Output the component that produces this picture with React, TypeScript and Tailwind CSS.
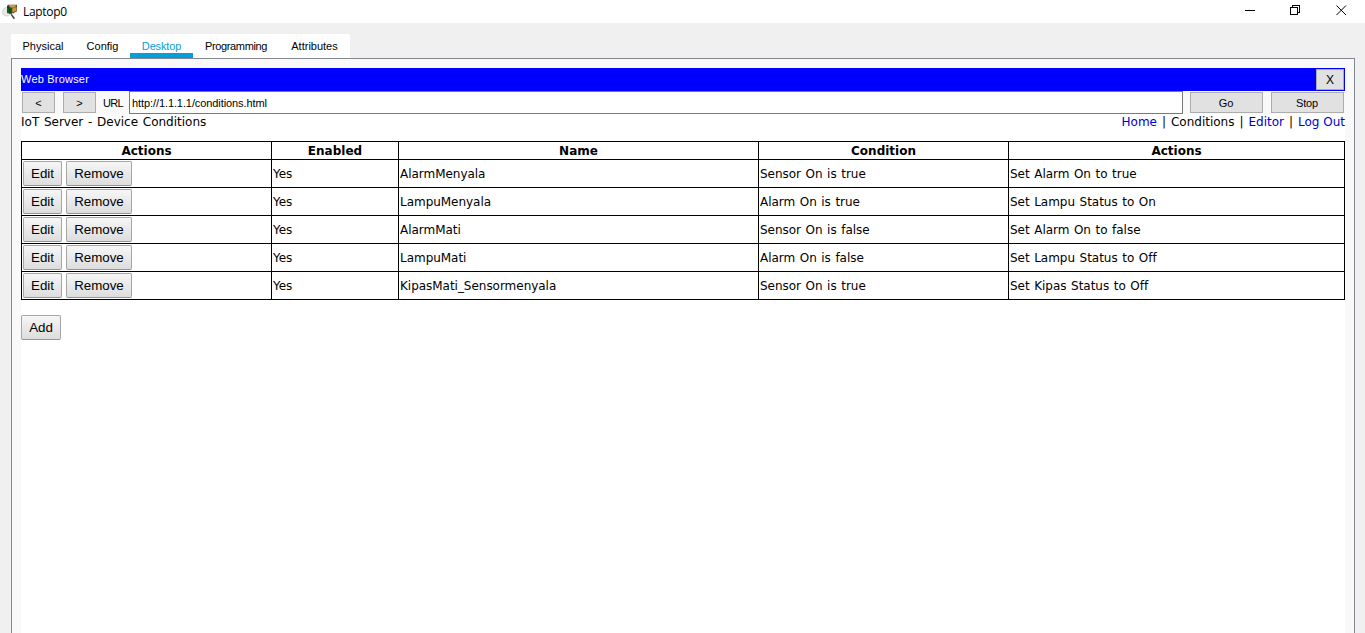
import type { ReactNode } from 'react';

const arial = "font-['Liberation_Sans',Arial,sans-serif]";
const verdana = "font-['DejaVu_Sans',Verdana,sans-serif]";

const tabs = [
  { label: 'Physical', box: 'w-16', active: false },
  { label: 'Config', box: 'w-[55px]', active: false },
  { label: 'Desktop', box: 'w-[63px] tracking-[-0.15px]', active: true },
  { label: 'Programming', box: 'w-[86px] tracking-[-0.35px]', active: false },
  { label: 'Attributes', box: 'w-[71px]', active: false },
];

const rules = [
  { name: 'AlarmMenyala', condition: 'Sensor On is true', action: 'Set Alarm On to true' },
  { name: 'LampuMenyala', condition: 'Alarm On is true', action: 'Set Lampu Status to On' },
  { name: 'AlarmMati', condition: 'Sensor On is false', action: 'Set Alarm On to false' },
  { name: 'LampuMati', condition: 'Alarm On is false', action: 'Set Lampu Status to Off' },
  { name: 'KipasMati_Sensormenyala', condition: 'Sensor On is true', action: 'Set Kipas Status to Off' },
];

const headers = ['Actions', 'Enabled', 'Name', 'Condition', 'Actions'];
const columns = 'grid grid-cols-[250px_127px_360px_250px_336px]';

function NativeButton({ className, children }: { className: string; children: ReactNode }) {
  return (
    <button className={`flex h-[21px] shrink-0 items-center justify-center border border-[#adadad] bg-[#e1e1e1] pt-px text-[11px] text-black ${className}`}>
      {children}
    </button>
  );
}

function FormButton({ className, children }: { className: string; children: ReactNode }) {
  return (
    <button className={`flex h-[25px] shrink-0 items-center justify-center rounded-[2px] border border-[#a6a6a6] border-b-[#949494] bg-linear-to-b from-[#f6f6f6] to-[#dddddd] pt-px text-[13.33px] leading-4 text-black ${arial} ${className}`}>
      {children}
    </button>
  );
}

function Cell({ children }: { children: ReactNode }) {
  return (
    <div className="flex items-center border-r border-b border-black pl-px tracking-[-0.03px] whitespace-pre [word-spacing:0.8px]">
      {children}
    </div>
  );
}

function Separator() {
  return <span className="w-3.5 text-center">|</span>;
}

function AppIcon() {
  return (
    <svg width="16" height="16" viewBox="0 0 16 16">
      <ellipse cx="4.8" cy="7.8" rx="4.3" ry="4.2" fill="#e6e9e6" stroke="#c3c7c3" strokeWidth=".7" />
      <path d="M5.5.8H15v6.4L11 9.5 5.5 7.5z" fill="#5d4820" />
      <path d="m6.8 1 7.6.2-2 2.3-4 .2z" fill="#caa052" />
      <path d="M10.3 4.2 14.5 3v3.9l-4.2 1.6z" fill="#c1974a" />
      <path d="M5 1.8 9.8 4v6.3L5 9z" fill="#14601f" />
      <path d="M5.5 2.5 8 6v3.4" fill="none" stroke="#0a3515" />
      <path d="m9.2 10.4 3.2 4.4" stroke="#3c4341" strokeWidth="1.5" />
    </svg>
  );
}

export default function App() {
  return (
    <div className={`flex h-[633px] w-[1365px] flex-col overflow-hidden bg-[#f0f0f0] text-black ${arial}`}>
      <header className="flex h-[23px] shrink-0 items-start justify-between bg-white pr-[18px] pl-0.5">
        <div className="flex items-center gap-[5px] pt-[3px]">
          <AppIcon />
          <span className="font-['Open_Sans','Noto_Sans',sans-serif] text-[12px] leading-[18px] tracking-[-0.3px]">Laptop0</span>
        </div>
        <div className="flex items-center gap-[35px] pt-[5px]">
          <svg width="11" height="11" viewBox="0 0 11 11" shapeRendering="crispEdges">
            <path d="M1 5.5h10" stroke="#000" />
          </svg>
          <svg width="11" height="11" viewBox="0 0 11 11" fill="none" stroke="#000" shapeRendering="crispEdges">
            <path d="M.5 2.5h7v7h-7zM2.5 2.5v-2h7v7h-2" />
          </svg>
          <svg width="11" height="11" viewBox="0 0 11 11" stroke="#000">
            <path d="m.5.5 9.5 9.5m0-9.5-9.5 9.5" />
          </svg>
        </div>
      </header>

      <nav className="mt-[11px] ml-[11px] flex h-6 w-[339px] shrink-0 bg-white text-[11px]">
        {tabs.map((tab) => (
          <div
            key={tab.label}
            className={`flex h-6 items-center justify-center whitespace-nowrap ${tab.box} ${tab.active ? 'border-b-[5px] border-[#049fd9] pt-[5px] text-[#049fd9]' : ''}`}
          >
            {tab.label}
          </div>
        ))}
      </nav>

      <main className="mr-2.5 ml-[11px] flex flex-1 flex-col border-x border-t border-[#828790] bg-[#f9f9f9] px-[9px] pt-[9px]">
        <div className="flex h-[23px] shrink-0 items-center justify-between bg-[#0000ff] pr-px text-[11px] text-white">
          <span className="tracking-[0.2px]">Web Browser</span>
          <NativeButton className="w-7 text-[12px]">X</NativeButton>
        </div>
        <div className="flex h-[23px] shrink-0 items-center pr-px pl-px text-[11px]">
          <NativeButton className="w-[33px]">&lt;</NativeButton>
          <NativeButton className="ml-2 w-[33px]">&gt;</NativeButton>
          <span className="w-[33px] pt-px pl-[7px] tracking-[-0.7px]">URL</span>
          <div className="flex h-[23px] flex-1 items-center border border-[#7a7a7a] bg-white pt-px pl-0.5 tracking-[-0.09px]">
            http://1.1.1.1/conditions.html
          </div>
          <NativeButton className="ml-[7px] w-[73px] pr-px">Go</NativeButton>
          <NativeButton className="ml-2 w-[73px] pr-px tracking-[-0.15px]">Stop</NativeButton>
        </div>

        <section className={`flex-1 bg-white text-[12px] leading-4 ${verdana}`}>
          <div className="flex h-[15px] items-center justify-between whitespace-pre">
            <span className="[word-spacing:0.9px]">IoT Server - Device Conditions</span>
            <div className="flex">
              <a className="text-[#0000d0]">Home</a>
              <Separator />
              <span>Conditions</span>
              <Separator />
              <a className="text-[#0000d0]">Editor</a>
              <Separator />
              <a className="text-[#0000d0]">Log Out</a>
            </div>
          </div>

          <div className="mt-3 border-t border-l border-black">
            <div className={`h-[18px] ${columns}`}>
              {headers.map((header, i) => (
                <div key={i} className="flex items-center justify-center border-r border-b border-black font-bold">
                  {header}
                </div>
              ))}
            </div>
            {rules.map((rule) => (
              <div key={rule.name} className={`h-7 ${columns}`}>
                <Cell>
                  <FormButton className="w-[39px]">Edit</FormButton>
                  <FormButton className="ml-1 w-[66px]">Remove</FormButton>
                </Cell>
                <Cell>Yes</Cell>
                <Cell>{rule.name}</Cell>
                <Cell>{rule.condition}</Cell>
                <Cell>{rule.action}</Cell>
              </div>
            ))}
          </div>
          <FormButton className="mt-[15px] w-10">Add</FormButton>
        </section>
      </main>
    </div>
  );
}
